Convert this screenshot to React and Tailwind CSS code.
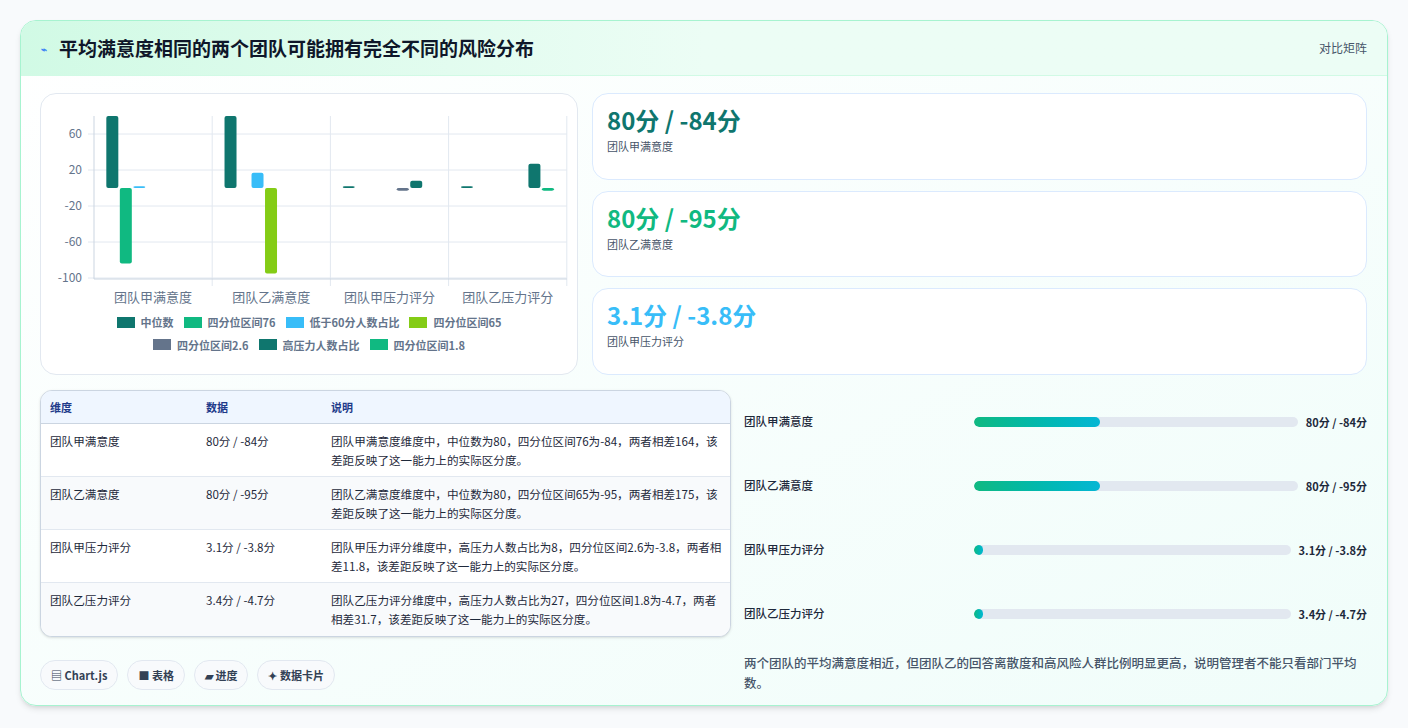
import React from 'react';

const FONT = { fontFamily: '"Noto Sans CJK SC", "Noto Sans", sans-serif' };

const CATS = ['团队甲满意度', '团队乙满意度', '团队甲压力评分', '团队乙压力评分'];
const COLORS = ['#0f766e', '#10b981', '#38bdf8', '#84cc16', '#64748b', '#0f766e', '#10b981'];
// [category, slot, value]
const BARS = [
    [0, 0, 80], [0, 1, -84], [0, 2, 2],
    [1, 0, 80], [1, 2, 17], [1, 3, -95],
    [2, 0, 2], [2, 4, -3], [2, 5, 8],
    [3, 0, 2], [3, 5, 27], [3, 6, -3],
];
const LEGEND = [
    ['中位数', '#0f766e'], ['四分位区间76', '#10b981'], ['低于60分人数占比', '#38bdf8'], ['四分位区间65', '#84cc16'],
    ['四分位区间2.6', '#64748b'], ['高压力人数占比', '#0f766e'], ['四分位区间1.8', '#10b981'],
];

const METRICS = [
    { v: '80分 / -84分', l: '团队甲满意度', c: 'text-[#0f766e]' },
    { v: '80分 / -95分', l: '团队乙满意度', c: 'text-[#10b981]' },
    { v: '3.1分 / -3.8分', l: '团队甲压力评分', c: 'text-[#38bdf8]' },
];

const ROWS = [
    ['团队甲满意度', '80分 / -84分', '团队甲满意度维度中，中位数为80，四分位区间76为-84，两者相差164，该差距反映了这一能力上的实际区分度。'],
    ['团队乙满意度', '80分 / -95分', '团队乙满意度维度中，中位数为80，四分位区间65为-95，两者相差175，该差距反映了这一能力上的实际区分度。'],
    ['团队甲压力评分', '3.1分 / -3.8分', '团队甲压力评分维度中，高压力人数占比为8，四分位区间2.6为-3.8，两者相差11.8，该差距反映了这一能力上的实际区分度。'],
    ['团队乙压力评分', '3.4分 / -4.7分', '团队乙压力评分维度中，高压力人数占比为27，四分位区间1.8为-4.7，两者相差31.7，该差距反映了这一能力上的实际区分度。'],
];

const PROGRESS = [
    ['团队甲满意度', '80分 / -84分', 39],
    ['团队乙满意度', '80分 / -95分', 39],
    ['团队甲压力评分', '3.1分 / -3.8分', 3],
    ['团队乙压力评分', '3.4分 / -4.7分', 3],
];

function Chart() {
    // coordinates relative to chart card (card at page 40,93)
    const x0 = 53, cw = 118.2, zero = 94, k = 0.9;
    const ticks = [60, 20, -20, -60, -100];
    return (
        <svg width="538" height="212" className="block">
            {ticks.map((t) => (
                <g key={t}>
                    <line x1={x0 - 6} x2={x0 + cw * 4} y1={zero - t * k} y2={zero - t * k} stroke="#e2e8f0" />
                    <text x={x0 - 12} y={zero - t * k + 4} textAnchor="end" fontSize="12" fill="#64748b">{t}</text>
                </g>
            ))}
            {[0, 1, 2, 3, 4].map((i) => (
                <line key={i} x1={x0 + cw * i} x2={x0 + cw * i} y1={22} y2={i === 0 ? 185 : 192} stroke={i === 0 ? '#cbd5e1' : '#e2e8f0'} />
            ))}
            <line x1={x0} x2={x0 + cw * 4} y1={185} y2={185} stroke="#cbd5e1" />
            {BARS.map(([c, s, v], i) => {
                const x = x0 + cw * c + cw * 0.1 + s * 13.5 + 0.5;
                const h = Math.abs(v) * k;
                const y = v >= 0 ? zero - h : zero;
                return <rect key={i} x={x} y={y} width="12" height={h} rx="2" fill={COLORS[s]} />;
            })}
            {CATS.map((c, i) => (
                <text key={c} x={x0 + cw * i + cw / 2} y={208} textAnchor="middle" fontSize="13" fill="#64748b">{c}</text>
            ))}
        </svg>
    );
}

export default function App() {
    return (
        <div style={FONT} className="w-[1408px] h-[728px] bg-[#f8fafc] p-5">
            <div className="h-[686px] rounded-2xl border border-[#a7f3d0] bg-gradient-to-br from-white to-[#f0fdfa] shadow-md overflow-hidden flex flex-col">
                {/* Header */}
                <div className="h-[55px] shrink-0 flex items-center justify-between px-5 bg-gradient-to-r from-[#d1fae5] via-[#ecfdf5] to-[#ecfdf5] border-b border-[#d1fae5]">
                    <h2 className="flex items-center gap-3 text-[19px] font-bold text-[#0f172a]">
                        <span className="text-[10px] text-[#3b82f6]">⌁</span>
                        平均满意度相同的两个团队可能拥有完全不同的风险分布
                    </h2>
                    <span className="text-xs text-[#475569]">对比矩阵</span>
                </div>

                <div className="flex-1 pl-[19px] pr-5 pt-[17px] flex flex-col">
                    {/* Top row */}
                    <div className="flex gap-[14px] h-[282px]">
                        <div className="w-[538px] shrink-0 rounded-2xl border border-[#e2e8f0] bg-white">
                            <Chart />
                            <div className="flex flex-wrap justify-center gap-x-[10px] gap-y-[6px] px-12 mt-[8px]">
                                {LEGEND.map(([l, c], i) => (
                                    <span key={i} className="flex items-center gap-[6px] text-[11px] font-semibold text-[#64748b]">
                                        <span className="w-[18px] h-[11px]" style={{ background: c }} />
                                        {l}
                                    </span>
                                ))}
                            </div>
                        </div>
                        <div className="flex-1 flex flex-col gap-[11px]">
                            {METRICS.map((m) => (
                                <div key={m.l} className="h-[87px] rounded-2xl border border-[#dbeafe] bg-white px-[14px] pt-[10px]">
                                    <div className={`text-[24px] leading-8 font-bold ${m.c}`}>{m.v}</div>
                                    <div className="text-[11px] text-[#475569] mt-[2px]">{m.l}</div>
                                </div>
                            ))}
                        </div>
                    </div>

                    {/* Bottom row */}
                    <div className="flex gap-[13px] mt-[15px]">
                        <div className="w-[691px] shrink-0">
                            <div className="rounded-xl border border-[#cbd5e1] overflow-hidden bg-white shadow-sm">
                                <div className="flex bg-[#eff6ff] h-[33px] items-center text-[11px] font-bold text-[#1e3a8a] border-b border-[#cbd5e1]">
                                    <div className="w-[165px] pl-[9px]">维度</div>
                                    <div className="w-[125px]">数据</div>
                                    <div className="flex-1">说明</div>
                                </div>
                                {ROWS.map((r, i) => (
                                    <div key={i} className={`flex items-start h-[53px] pt-[8px] text-[11.6px] text-[#1e293b] leading-[19px] ${i < 3 ? 'border-b border-[#e2e8f0]' : ''} ${i % 2 ? 'bg-[#f8fafc]' : 'bg-white'}`}>
                                        <div className="w-[165px] pl-[9px]">{r[0]}</div>
                                        <div className="w-[125px]">{r[1]}</div>
                                        <div className="flex-1 pr-2">{r[2]}</div>
                                    </div>
                                ))}
                            </div>
                            <div className="flex gap-[9px] mt-[23px]">
                                {['▤ Chart.js', '■ 表格', '▰ 进度', '✦ 数据卡片'].map((t) => (
                                    <span key={t} className="h-[30px] px-[10px] flex items-center rounded-full border border-[#e2e8f0] bg-[#f8fafc] text-[11px] font-semibold text-[#334155]">{t}</span>
                                ))}
                            </div>
                        </div>
                        <div className="flex-1 flex flex-col">
                            {PROGRESS.map(([l, v, p]) => (
                                <div key={l} className="h-[64px] flex items-center">
                                    <div className="w-[230px] text-[11.5px] font-medium text-[#1e293b]">{l}</div>
                                    <div className="flex-1 h-[10px] rounded-full bg-[#e2e8f0] overflow-hidden">
                                        <div className="h-full rounded-full bg-gradient-to-r from-[#10b981] to-[#06b6d4]" style={{ width: `${p}%` }} />
                                    </div>
                                    <div className="pl-2 text-[11px] font-bold text-[#1e293b] text-right">{v}</div>
                                </div>
                            ))}
                            <p className="mt-[7px] text-[12.5px] leading-[20px] text-[#475569] font-medium">
                                两个团队的平均满意度相近，但团队乙的回答离散度和高风险人群比例明显更高，说明管理者不能只看部门平均数。
                            </p>
                        </div>
                    </div>
                </div>
            </div>
        </div>
    );
}
